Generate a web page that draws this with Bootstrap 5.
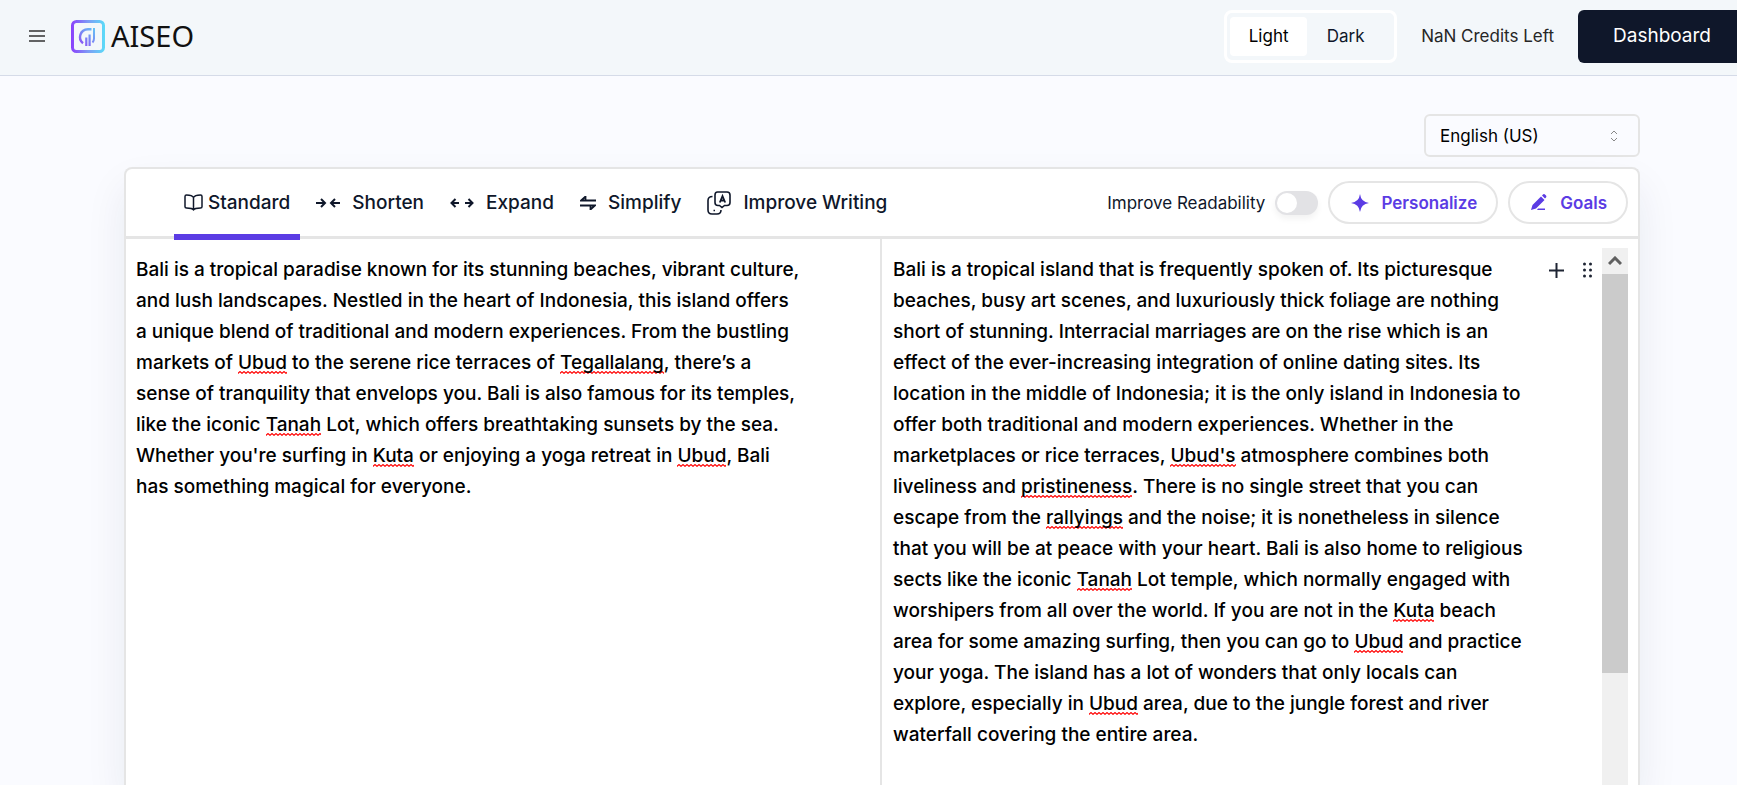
<!DOCTYPE html>
<html lang="en">
<head>
<meta charset="utf-8">
<meta name="viewport" content="width=device-width, initial-scale=1">
<title>AISEO</title>
<link href="https://cdn.jsdelivr.net/npm/bootstrap@5.3.0/dist/css/bootstrap.min.css" rel="stylesheet">
<style>
body{font-family:Inter,"Liberation Sans",sans-serif;font-weight:400;font-size:17px;line-height:24px;color:#0f172a;background:#fafbff}
button,select{font-family:inherit}
.topbar{height:76px;background:#f3f7fa;border-bottom:1px solid #d5dbe8;padding:0 0 3px 29px}
.plain-btn{background:none;border:0;padding:0;color:inherit;display:flex;align-items:center}
.brand{margin-left:26px;gap:6px}
.wordmark{font-family:"Noto Sans",sans-serif;font-weight:400;font-size:29px;line-height:32px;color:#111}
.theme-switch{height:53px;width:173px;border:3px solid #fff;border-radius:8px;padding:4px 3px}
.theme-switch button{height:39px;width:77px;border:0;background:none;border-radius:4px;color:#0f172a;padding:0}
.theme-switch button.on{background:#fff;color:#000}
.credits{color:#262626}
.dash{height:53px;width:159px;background:#0f172a;color:#fff;border:0;border-radius:6px 0 0 6px;font-size:19px;padding:0 0 0 35px;text-align:left}
.workspace{margin:38px 97px 0 124px}
.lang{width:216px;height:43px;border:2px solid #e5e5e5;border-radius:6px;padding:0 14px;color:#000;appearance:none;background:url("data:image/svg+xml,%3Csvg xmlns='http://www.w3.org/2000/svg' width='8' height='12' fill='none' stroke='%23888'%3E%3Cpath d='M1 4l3-3 3 3M1 8l3 3 3-3'/%3E%3C/svg%3E") no-repeat right 20px center}
.editor{margin-top:10px;background:#fff;border:2px solid #e5e5e5;border-bottom:0;border-radius:8px 8px 0 0;box-shadow:0 20px 40px rgba(30,41,80,.08)}
.tools{height:70px;border-bottom:3px solid #e5e5e5;padding:0 10px 0 48px}
.tabs{gap:6px}
.actions{gap:10px}
.tab{position:relative;height:67px;border:0;background:none;color:#0f172a;font-size:19px;font-weight:500;padding:0 10px;display:flex;align-items:center;gap:12px}
.tab.on{gap:5px}
.tab.on::after{content:"";position:absolute;left:0;right:0;bottom:-4px;height:6px;background:#5b3ce4}
.tgl.form-check-input{width:43px;height:24px;margin:0;border:0;background-color:#e2e2e5;box-shadow:0 4px 6px rgba(0,0,0,.05);background-image:url("data:image/svg+xml,%3Csvg xmlns='http://www.w3.org/2000/svg' viewBox='-12 -12 24 24'%3E%3Ccircle r='10' fill='%23fff'/%3E%3C/svg%3E")}
.pill{height:43px;border:2px solid #e5e5e5;border-radius:22px;background:#fff;color:#5b3ce4;font-weight:600;padding:0 19px 0 21px;display:flex;align-items:center;gap:12px}
.prose{font-size:19px;line-height:31px;color:#000;font-weight:500;outline:0}
.pane-l{border-right:2px solid #e5e5e5;padding:15px 80px 0 10px}
.pane-r{padding:9px 10px 0 11px}
.pane-r .prose{padding-top:6px;width:642px}
.pane-tools{gap:18px;padding-top:14px}
.sp{background:url("data:image/svg+xml,%3Csvg xmlns='http://www.w3.org/2000/svg' width='4' height='3' fill='none' stroke='%23f00' stroke-width='1.2'%3E%3Cpath d='M-1 3.200L0 2.400 2 .6 4 2.400 5 3.200'/%3E%3C/svg%3E") repeat-x left bottom}
.sbar{width:26px;background:#f0f0f0}
.sbar button{width:26px;height:26px;justify-content:center}
.thumb{height:399px;background:#cbcbcb}
</style>
</head>
<body class="vh-100 overflow-hidden d-flex flex-column">
<header class="topbar d-flex align-items-center flex-shrink-0">
  <button class="plain-btn" aria-label="Menu"><svg width="16" height="12" stroke="#333" stroke-width="1.4"><path d="M0 1h16M0 6h16M0 11h16"/></svg></button>
  <a href="#" class="brand d-flex align-items-center text-decoration-none">
    <svg width="34" height="33" viewBox="0 0 34 33" fill="none"><defs><linearGradient id="g" x1="0" y1="0" x2="34" y2="0" gradientUnits="userSpaceOnUse"><stop stop-color="#8a3ffc"/><stop offset=".5" stop-color="#7d9bf5"/><stop offset="1" stop-color="#5bdcf8"/></linearGradient><linearGradient id="m" x1="8" y1="26" x2="24" y2="8" gradientUnits="userSpaceOnUse"><stop stop-color="#9145f5"/><stop offset="1" stop-color="#62c8f5"/></linearGradient></defs><rect x="1.500" y="1.500" width="31" height="30" rx="4" stroke="url(#g)" stroke-width="3"/><g stroke="url(#m)"><path d="M20.500 9.200H17c-8 .3-10.500 9.500-5 14" stroke-width="2.400"/><path d="M23 8v10.500q0 2.500-1.500 4" stroke-width="2"/><path d="M15.300 26v-8.500M18.600 26V14.500" stroke-width="2.200"/></g></svg>
    <span class="wordmark">AISEO</span>
  </a>
  <div class="theme-switch d-flex ms-auto"><button class="on">Light</button><button>Dark</button></div>
  <span class="credits mx-4">NaN Credits Left</span>
  <button class="dash">Dashboard</button>
</header>
<main class="workspace d-flex flex-column flex-grow-1">
  <div class="d-flex justify-content-end"><select class="lang" aria-label="Language"><option>English (US)</option></select></div>
  <section class="editor d-flex flex-column flex-grow-1">
    <div class="tools d-flex align-items-center flex-shrink-0">
      <nav class="tabs d-flex">
        <button class="tab on"><svg width="19" height="17" viewBox="0 0 19 17" fill="none" stroke="currentColor" stroke-width="1.500" stroke-linejoin="round"><path d="M9.500 3.500C8.500 1.500 6 1 2.500 1Q1 1 1 2.500v10.300Q1 14 2.500 14c3.500 0 6 0 7 2 1-2 3.500-2 7-2q1.500 0 1.500-1.200V2.500Q18 1 16.500 1c-3.500 0-6 .5-7 2.500zV16"/></svg>Standard</button>
        <button class="tab"><svg width="24" height="12" fill="none" stroke="currentColor" stroke-width="2"><path d="M0 6h8M5 2l4 4-4 4M24 6h-8M19 2l-4 4 4 4"/></svg>Shorten</button>
        <button class="tab"><svg width="24" height="12" fill="none" stroke="currentColor" stroke-width="2"><path d="M1.500 6H9M5.500 2l-4 4 4 4M22.500 6H15M18.500 2l4 4-4 4"/></svg>Expand</button>
        <button class="tab"><svg width="16" height="14" fill="none" stroke="currentColor" stroke-width="1.800"><path d="M16 4.500H1L5.500.5v4M0 9.500h15l-4.500 4v-4"/></svg>Simplify</button>
        <button class="tab"><svg width="24" height="24" viewBox="0 0 24 24" fill="none" stroke="currentColor" stroke-width="1.600"><path d="M10.500 1h9.500q3 0 3 3v7.500q0 3-3 3h-2.500L15 16.500l-2.500-2H11q-3 0-3-3V4q0-3 2.500-3z"/><path d="M12.800 11.500L15.500 5l2.700 6.500M13.800 9.500h3.500" stroke-width="1.800"/><path d="M5.500 5.500Q1 5.500 1 9.500V19q0 4 4 4h5q4 0 4-4M6.500 19.500H8"/></svg>Improve Writing</button>
      </nav>
      <div class="actions d-flex align-items-center ms-auto">
        <label for="rd">Improve Readability</label>
        <div class="form-check form-switch m-0 p-0 d-flex"><input class="form-check-input tgl" type="checkbox" role="switch" id="rd"></div>
        <button class="pill"><svg width="18" height="18" fill="currentColor"><path d="M9 0q1 8 9 9-8 1-9 9-1-8-9-9 8-1 9-9z"/></svg>Personalize</button>
        <button class="pill"><svg width="17" height="17" fill="currentColor"><path d="M0 16l1.500-5L10 2.500 13.500 6 5 14.500zM11 1.500l1-1q1-1 2.500.5t.5 2.500l-1 1zM7 14.500h7V16H6z"/></svg>Goals</button>
      </div>
    </div>
    <div class="row g-0 flex-grow-1">
      <div class="col-6 pane-l">
        <div class="prose" contenteditable="true" spellcheck="false">Bali is a tropical paradise known for its stunning beaches, vibrant culture, and lush landscapes. Nestled in the heart of Indonesia, this island offers a unique blend of traditional and modern experiences. From the bustling markets of <span class="sp">Ubud</span> to the serene rice terraces of <span class="sp">Tegallalang</span>, there’s a sense of tranquility that envelops you. Bali is also famous for its temples, like the iconic <span class="sp">Tanah</span> Lot, which offers breathtaking sunsets by the sea. Whether you're surfing in <span class="sp">Kuta</span> or enjoying a yoga retreat in <span class="sp">Ubud</span>, Bali has something magical for everyone.</div>
      </div>
      <div class="col-6 pane-r d-flex">
        <div class="prose" contenteditable="true" spellcheck="false">Bali is a tropical island that is frequently spoken of. Its picturesque beaches, busy art scenes, and luxuriously thick foliage are nothing short of stunning. Interracial marriages are on the rise which is an effect of the ever-increasing integration of online dating sites. Its location in the middle of Indonesia; it is the only island in Indonesia to offer both traditional and modern experiences. Whether in the marketplaces or rice terraces, <span class="sp">Ubud's</span> atmosphere combines both liveliness and <span class="sp">pristineness</span>. There is no single street that you can escape from the <span class="sp">rallyings</span> and the noise; it is nonetheless in silence that you will be at peace with your heart. Bali is also home to religious sects like the iconic <span class="sp">Tanah</span> Lot temple, which normally engaged with worshipers from all over the world. If you are not in the <span class="sp">Kuta</span> beach area for some amazing surfing, then you can go to <span class="sp">Ubud</span> and practice your yoga. The island has a lot of wonders that only locals can explore, especially in <span class="sp">Ubud</span> area, due to the jungle forest and river waterfall covering the entire area.</div>
        <div class="d-flex align-items-start ms-auto">
          <div class="pane-tools d-flex align-items-center me-2">
            <button class="plain-btn" aria-label="Add"><svg width="15" height="15" stroke="#1e2433" stroke-width="2"><path d="M7.500 0v15M0 7.500h15"/></svg></button>
            <button class="plain-btn" aria-label="Drag"><svg width="12" height="16" fill="#1e2433"><circle cx="2.500" cy="2" r="1.500"/><circle cx="8.500" cy="2" r="1.500"/><circle cx="2.500" cy="8" r="1.500"/><circle cx="8.500" cy="8" r="1.500"/><circle cx="2.500" cy="14" r="1.500"/><circle cx="8.500" cy="14" r="1.500"/></svg></button>
          </div>
          <div class="sbar h-100"><button class="plain-btn" aria-label="Scroll up"><svg width="14" height="11" fill="none" stroke="#606060" stroke-width="3"><path d="M1 8l6-6 6 6"/></svg></button><div class="thumb"></div></div>
        </div>
      </div>
    </div>
  </section>
</main>
<script src="https://cdn.jsdelivr.net/npm/bootstrap@5.3.0/dist/js/bootstrap.bundle.min.js"></script>
</body>
</html>
